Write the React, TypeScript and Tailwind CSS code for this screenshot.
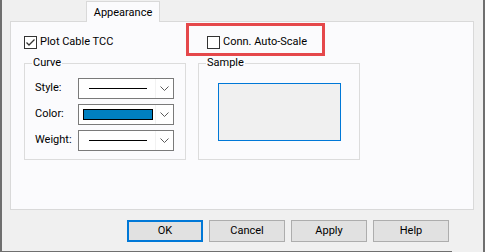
const font = { fontFamily: "Roboto, 'Noto Sans', sans-serif" };

const Chevron = () => (
  <svg width="9" height="5" viewBox="0 0 9 5" className="block">
    <path d="M0.5 0.5 L4.5 4.5 L8.5 0.5" fill="none" stroke="#5a5a5a" strokeWidth="1" />
  </svg>
);

const Checkbox = ({ checked }: { checked?: boolean }) => (
  <div className="w-[13px] h-[13px] border border-[#333333] bg-white shrink-0">
    {checked && (
      <svg width="11" height="11" viewBox="0 0 11 11" className="block">
        <path d="M1.5 5.5 L4 8 L9.5 2.5" fill="none" stroke="#333333" strokeWidth="1.3" />
      </svg>
    )}
  </div>
);

const Dropdown = ({ children }: { children: React.ReactNode }) => (
  <div className="w-[96px] h-[21px] border border-[#7a7a7a] bg-white flex">
    <div className="flex-1 flex items-center">{children}</div>
    <div className="w-[18px] border-l border-[#f2f2f2] flex items-center justify-center">
      <Chevron />
    </div>
  </div>
);

const Group = ({
  title,
  className,
  children,
}: {
  title: string;
  className: string;
  children: React.ReactNode;
}) => (
  <div className={`relative border border-[#dcdcdc] ${className}`}>
    <span className="absolute left-[7px] top-[-9px] px-[1px] bg-[#fbfbfd] leading-[16px]">
      {title}
    </span>
    {children}
  </div>
);

const rows = ["Style:", "Color:", "Weight:"];

export default function App() {
  return (
    <div
      className="relative w-[485px] h-[252px] bg-[#f0f0f0] border-l-2 border-r-2 border-[#6f6f6f] flex flex-col text-[11px] text-black"
      style={font}
    >
      {/* tab strip */}
      <div className="pt-[1px] pl-[8px]">
        <div className="ml-[76px] w-[74px] h-[21px] -mb-px relative z-10 border border-b-0 border-[#d9d9d9] bg-[#fbfbfd] flex items-center justify-center leading-none">
          Appearance
        </div>
        <div className="relative w-[464px] h-[189px] border border-[#d9d9d9] bg-[#fbfbfd] pt-[14px] pl-[13px]">
          <div className="flex items-center h-[13px]">
            <div className="w-[183px] flex items-center gap-[3px]">
              <Checkbox checked />
              <span>Plot Cable TCC</span>
            </div>
            <div className="flex items-center gap-[3px]">
              <Checkbox />
              <span>Conn. Auto-Scale</span>
            </div>
          </div>

          <div className="flex gap-[12px] mt-[14px]">
            <Group title="Curve" className="w-[162px] h-[97px] pt-[14px] pl-[10px]">
              <div className="flex flex-col gap-[5px]">
                {rows.map((r) => (
                  <div key={r} className="flex items-center">
                    <span className="w-[43px]">{r}</span>
                    <Dropdown>
                      {r === "Color:" ? (
                        <div className="ml-[4px] w-[70px] h-[11px] border border-black bg-[#0080c0]" />
                      ) : (
                        <div className="ml-[10px] w-[58px] h-px bg-black" />
                      )}
                    </Dropdown>
                  </div>
                ))}
              </div>
            </Group>
            <Group title="Sample" className="w-[162px] h-[97px] pt-[19px] pl-[19px]">
              <div className="w-[123px] h-[58px] border border-[#0078d7] bg-[#f0f0f0]" />
            </Group>
          </div>

          {/* highlight annotation */}
          <div className="absolute left-[175px] top-[1px] w-[139px] h-[33px] border-[3px] border-[#e5484b]" />
        </div>
      </div>

      {/* buttons */}
      <div className="flex gap-[6px] pl-[125px] mt-[10px]">
        {["OK", "Cancel", "Apply", "Help"].map((b) => (
          <div
            key={b}
            className={`w-[76px] h-[22px] flex items-center justify-center bg-[#e1e1e1] ${
              b === "OK" ? "border-2 border-[#0078d7]" : "border border-[#adadad]"
            }`}
          >
            {b}
          </div>
        ))}
      </div>

      <div className="mt-auto w-[450px] h-px bg-[#6f6f6f]" />
    </div>
  );
}
